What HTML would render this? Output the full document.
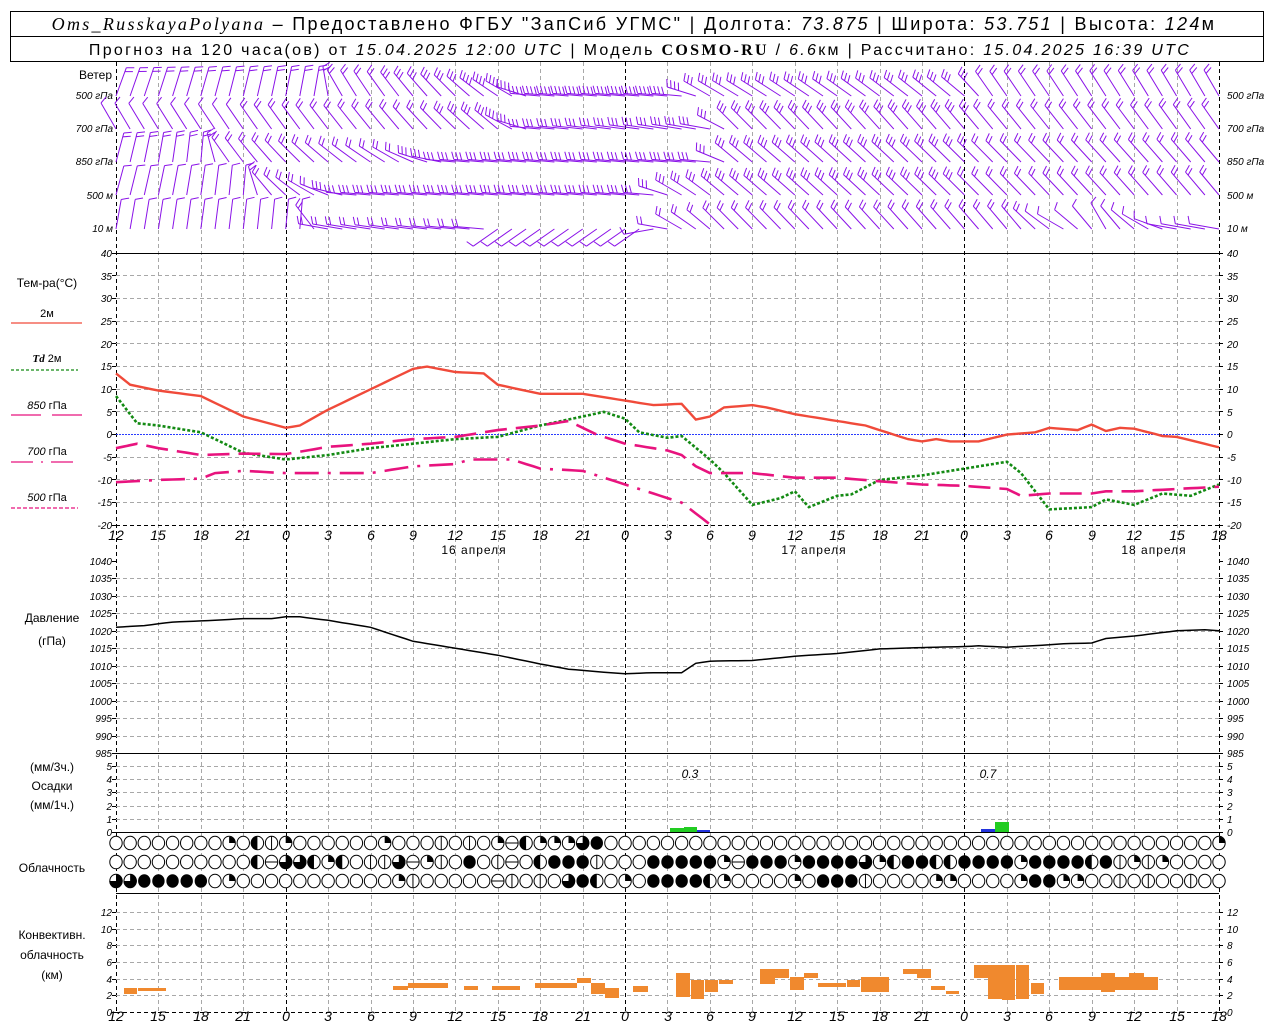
<!DOCTYPE html>
<html><head><meta charset="utf-8">
<style>
html,body{margin:0;padding:0;background:#fff;}
svg{display:block;}
text{font-family:"Liberation Sans",sans-serif;fill:#000;}
.ax{font-size:10px;font-style:italic;}
.tl{font-size:14px;font-style:italic;}
.lb{font-size:12px;}
</style></head><body>
<svg id="s" width="1280" height="1024" viewBox="0 0 1280 1024" xmlns="http://www.w3.org/2000/svg">
<rect x="0" y="0" width="1280" height="1024" fill="#fff"/>
<g id="grid"></g>
<!-- header -->
<rect x="10.5" y="11.5" width="1253" height="50" fill="none" stroke="#000"/>
<line x1="10" y1="36.5" x2="1264" y2="36.5" stroke="#000"/>
<text x="634" y="30" text-anchor="middle" style="font-size:18px;letter-spacing:2.3px"><tspan font-style="italic" font-family="Liberation Serif">Oms_RusskayaPolyana</tspan> – Предоставлено ФГБУ "ЗапСиб УГМС" | Долгота: <tspan font-style="italic">73.875</tspan> | Широта: <tspan font-style="italic">53.751</tspan> | Высота: <tspan font-style="italic">124</tspan>м</text>
<text x="640" y="55" text-anchor="middle" style="font-size:16px;letter-spacing:2.3px">Прогноз на 120 часа(ов) от <tspan font-style="italic">15.04.2025 12:00 UTC</tspan> | Модель <tspan font-weight="bold" font-family="Liberation Serif">COSMO-RU</tspan> / <tspan font-style="italic">6.6</tspan>км | Рассчитано: <tspan font-style="italic">15.04.2025 16:39 UTC</tspan></text>

<!-- left labels wind -->
<g class="lb">
<text x="112" y="79" text-anchor="end">Ветер</text>
</g>
<g class="ax" text-anchor="end">
<text x="113" y="99"><tspan>500</tspan> гПа</text>
<text x="113" y="132">700 гПа</text>
<text x="113" y="165">850 гПа</text>
<text x="113" y="199">500 м</text>
<text x="113" y="232">10  м</text>
</g>
<g class="ax">
<text x="1227" y="99">500 гПа</text>
<text x="1227" y="132">700 гПа</text>
<text x="1227" y="165">850 гПа</text>
<text x="1227" y="199">500 м</text>
<text x="1227" y="232">10  м</text>
</g>

<!-- temp legend -->
<g class="lb" text-anchor="middle">
<text x="47" y="287">Тем-ра(°С)</text>
<text x="47" y="317" style="font-size:11px">2м</text>
<text x="47" y="362" style="font-size:11px"><tspan font-style="italic" font-weight="bold" font-family="Liberation Serif">Td</tspan>  2м</text>
<text x="47" y="409" style="font-size:11px"><tspan font-style="italic">850</tspan> гПа</text>
<text x="47" y="455" style="font-size:11px"><tspan font-style="italic">700</tspan> гПа</text>
<text x="47" y="501" style="font-size:11px"><tspan font-style="italic">500</tspan> гПа</text>
<text x="52" y="622">Давление</text>
<text x="52" y="645">(гПа)</text>
<text x="52" y="771">(мм/3ч.)</text>
<text x="52" y="790">Осадки</text>
<text x="52" y="809">(мм/1ч.)</text>
<text x="52" y="872">Облачность</text>
<text x="52" y="939">Конвективн.</text>
<text x="52" y="959">облачность</text>
<text x="52" y="979">(км)</text>
</g>
<line x1="11" y1="323" x2="82" y2="323" stroke="#f04a3a" stroke-width="1.2"/>
<line x1="11" y1="370" x2="78" y2="370" stroke="#138a13" stroke-width="1.2" stroke-dasharray="3,2"/>
<line x1="11" y1="415" x2="41" y2="415" stroke="#e8137e" stroke-width="1.2"/>
<line x1="52" y1="415" x2="82" y2="415" stroke="#e8137e" stroke-width="1.2"/>
<line x1="11" y1="462" x2="78" y2="462" stroke="#e8137e" stroke-width="1.2" stroke-dasharray="22,8,2,8"/>
<line x1="11" y1="508" x2="78" y2="508" stroke="#e8137e" stroke-width="1.2" stroke-dasharray="4,2"/>

<!-- temp ticks -->
<g class="ax" text-anchor="end">
<text x="112" y="257">40</text><text x="112" y="280">35</text><text x="112" y="302">30</text><text x="112" y="325">25</text><text x="112" y="348">20</text><text x="112" y="370">15</text><text x="112" y="393">10</text><text x="112" y="416">5</text><text x="112" y="438">0</text><text x="112" y="461">-5</text><text x="112" y="484">-10</text><text x="112" y="506">-15</text><text x="112" y="529">-20</text>
<text x="112" y="565">1040</text><text x="112" y="582">1035</text><text x="112" y="600">1030</text><text x="112" y="617">1025</text><text x="112" y="635">1020</text><text x="112" y="652">1015</text><text x="112" y="670">1010</text><text x="112" y="687">1005</text><text x="112" y="705">1000</text><text x="112" y="722">995</text><text x="112" y="740">990</text><text x="112" y="757">985</text>
<text x="112" y="770">5</text><text x="112" y="783">4</text><text x="112" y="796">3</text><text x="112" y="810">2</text><text x="112" y="823">1</text><text x="112" y="836">0</text>
<text x="112" y="916">12</text><text x="112" y="933">10</text><text x="112" y="949">8</text><text x="112" y="966">6</text><text x="112" y="983">4</text><text x="112" y="999">2</text><text x="112" y="1016">0</text>
</g>
<g class="ax">
<text x="1227" y="257">40</text><text x="1227" y="280">35</text><text x="1227" y="302">30</text><text x="1227" y="325">25</text><text x="1227" y="348">20</text><text x="1227" y="370">15</text><text x="1227" y="393">10</text><text x="1227" y="416">5</text><text x="1227" y="438">0</text><text x="1227" y="461">-5</text><text x="1227" y="484">-10</text><text x="1227" y="506">-15</text><text x="1227" y="529">-20</text>
<text x="1227" y="565">1040</text><text x="1227" y="582">1035</text><text x="1227" y="600">1030</text><text x="1227" y="617">1025</text><text x="1227" y="635">1020</text><text x="1227" y="652">1015</text><text x="1227" y="670">1010</text><text x="1227" y="687">1005</text><text x="1227" y="705">1000</text><text x="1227" y="722">995</text><text x="1227" y="740">990</text><text x="1227" y="757">985</text>
<text x="1227" y="770">5</text><text x="1227" y="783">4</text><text x="1227" y="796">3</text><text x="1227" y="810">2</text><text x="1227" y="823">1</text><text x="1227" y="836">0</text>
<text x="1227" y="916">12</text><text x="1227" y="933">10</text><text x="1227" y="949">8</text><text x="1227" y="966">6</text><text x="1227" y="983">4</text><text x="1227" y="999">2</text><text x="1227" y="1016">0</text>
</g>

<!-- time labels -->
<g class="tl" text-anchor="middle">
<text x="116" y="540">12</text><text x="158" y="540">15</text><text x="201" y="540">18</text><text x="243" y="540">21</text><text x="286" y="540">0</text><text x="328" y="540">3</text><text x="371" y="540">6</text><text x="413" y="540">9</text><text x="455" y="540">12</text><text x="498" y="540">15</text><text x="540" y="540">18</text><text x="583" y="540">21</text><text x="625" y="540">0</text><text x="668" y="540">3</text><text x="710" y="540">6</text><text x="752" y="540">9</text><text x="795" y="540">12</text><text x="837" y="540">15</text><text x="880" y="540">18</text><text x="922" y="540">21</text><text x="964" y="540">0</text><text x="1007" y="540">3</text><text x="1049" y="540">6</text><text x="1092" y="540">9</text><text x="1134" y="540">12</text><text x="1177" y="540">15</text><text x="1219" y="540">18</text>
<text x="116" y="1021">12</text><text x="158" y="1021">15</text><text x="201" y="1021">18</text><text x="243" y="1021">21</text><text x="286" y="1021">0</text><text x="328" y="1021">3</text><text x="371" y="1021">6</text><text x="413" y="1021">9</text><text x="455" y="1021">12</text><text x="498" y="1021">15</text><text x="540" y="1021">18</text><text x="583" y="1021">21</text><text x="625" y="1021">0</text><text x="668" y="1021">3</text><text x="710" y="1021">6</text><text x="752" y="1021">9</text><text x="795" y="1021">12</text><text x="837" y="1021">15</text><text x="880" y="1021">18</text><text x="922" y="1021">21</text><text x="964" y="1021">0</text><text x="1007" y="1021">3</text><text x="1049" y="1021">6</text><text x="1092" y="1021">9</text><text x="1134" y="1021">12</text><text x="1177" y="1021">15</text><text x="1219" y="1021">18</text>
</g>
<g class="lb" text-anchor="middle" style="letter-spacing:1px">
<text x="474" y="554">16 апреля</text>
<text x="814" y="554">17 апреля</text>
<text x="1154" y="554">18 апреля</text>
</g>
<text class="ax" x="690" y="778" text-anchor="middle" style="font-size:12px">0.3</text>
<text class="ax" x="988" y="778" text-anchor="middle" style="font-size:12px">0.7</text>

<g id="dyn"></g>
</svg>
<script>
(function(){
var NS="http://www.w3.org/2000/svg";
var G=document.getElementById('grid'), D=document.getElementById('dyn');
function el(p,tag,a){var e=document.createElementNS(NS,tag);for(var k in a)e.setAttribute(k,a[k]);p.appendChild(e);return e;}
function X(h){return 116+h*14.141;}
var gray="#a8a8a8";
for(var i=0;i<=26;i++){var x=Math.round(X(i*3))+0.5;var day=(i==4||i==12||i==20);var edge=(i==0||i==26);
  el(G,'line',{x1:x,y1:62,x2:x,y2:1012,stroke:(day||edge)?'#000':gray,'stroke-dasharray':'4,3','stroke-width':1});}
function hl(y,c,d){el(G,'line',{x1:116,y1:y+0.5,x2:1219,y2:y+0.5,stroke:c,'stroke-dasharray':d||'none'});}
for(var t=35;t>=-15;t-=5){ if(t!=0) hl(Math.round(434-t*4.533),gray,'4,3');}
for(var p=1035;p>=990;p-=5){hl(Math.round(561+(1040-p)*3.49),gray,'4,3');}
for(var m=1;m<=5;m++){hl(Math.round(832-m*13.2),gray,'4,3');}
for(var k=2;k<=12;k+=2){hl(Math.round(1012-k*8.32),gray,'4,3');}
hl(253,'#000');hl(753,'#000');hl(832,'#000');hl(893,'#000');hl(525,'#000','4,3');hl(1012,'#000','4,3');
el(G,'line',{x1:116,y1:434.5,x2:1219,y2:434.5,stroke:'#2a3cff','stroke-dasharray':'2,1'});
function ticks(y){el(G,'line',{x1:112,y1:y+.5,x2:116,y2:y+.5,stroke:'#000'});el(G,'line',{x1:1219,y1:y+.5,x2:1223,y2:y+.5,stroke:'#000'});}
for(var t=40;t>=-20;t-=5)ticks(Math.round(434-t*4.533));
for(var p=1040;p>=985;p-=5)ticks(Math.round(561+(1040-p)*3.49));
for(var m=0;m<=5;m++)ticks(Math.round(832-m*13.2));
for(var k=0;k<=12;k+=2)ticks(Math.round(1012-k*8.32));

function interp(kp,h){for(var i=0;i<kp.length-1;i++){if(h>=kp[i][0]&&h<=kp[i+1][0]){var f=(h-kp[i][0])/(kp[i+1][0]-kp[i][0]||1);var r=[];for(var j=1;j<kp[i].length;j++)r.push(kp[i][j]+(kp[i+1][j]-kp[i][j])*f);return r;}}var l=kp[kp.length-1];return l.slice(1);}
function line(kp,fy,attrs){var d='';for(var h=kp[0][0];h<=kp[kp.length-1][0];h+=0.5){var v=interp(kp,h)[0];d+=(d?'L':'M')+X(h).toFixed(1)+','+fy(v).toFixed(1);}attrs.d=d;attrs.fill='none';el(D,'path',attrs);}
function TY(t){return 434.6-t*4.533;}
var red=[[0,13.5],[1,11],[3,9.7],[6,8.5],[9,4],[12,1.5],[13,2],[15,5.5],[18,10],[21,14.5],[22,15],[24,13.8],[26,13.5],[27,11],[30,9],[33,9],[34,8.5],[36,7.5],[38,6.5],[40,6.8],[41,3.3],[42,4],[43,6],[45,6.5],[46,6],[48,4.5],[51,3],[53,2],[55,0],[56,-1],[57,-1.5],[58,-1],[59,-1.5],[61,-1.5],[63,0],[65,0.5],[66,1.5],[68,1],[69,2.2],[70,0.8],[71,1.5],[72,1.3],[74,-0.3],[75,-0.5],[78,-2.8]];
var td=[[0,8.5],[1.5,2.5],[3,2],[6,0.5],[9,-4],[12,-5.5],[15,-4.5],[18,-3],[21,-2],[24,-1],[27,-0.5],[30,2],[33,4],[34.5,5],[36,3.5],[37,0.5],[39,-0.7],[40,-0.3],[42,-5.5],[43,-8.5],[45,-15.5],[47,-14],[48,-12.5],[49,-16],[51,-13.5],[52,-13.2],[54,-10],[57,-9],[60,-7.5],[63,-6],[64,-8.5],[66,-16.5],[69,-16],[70,-14.3],[72,-15.5],[74,-13],[76,-13.5],[78,-11]];
var p850=[[0,-3],[1.5,-2],[3,-3],[6,-4.5],[9,-4.2],[12,-4.3],[15,-2.7],[18,-2],[21,-1],[24,-0.5],[27,1],[30,2],[32,3],[33,1.5],[34,0],[36,-2],[39,-3.5],[40,-4.5],[41,-7],[42,-8.5],[45,-8.5],[48,-9.5],[51,-9.5],[54,-10.3],[57,-11],[60,-11.3],[63,-12],[64,-13.5],[66,-13],[69,-13],[70,-12.5],[72,-12.5],[75,-12],[78,-11.5]];
var p700=[[0,-10.5],[3,-10],[6,-9.7],[7,-8.5],[9,-8],[12,-8.5],[15,-8.5],[18,-8.5],[21,-7],[24,-6.5],[25,-5.5],[28,-5.5],[30,-7.5],[33,-8],[36,-11],[39,-14],[40,-15],[42,-19.8]];
line(red,TY,{stroke:'#f04a3a','stroke-width':2.4});
line(td,TY,{stroke:'#138a13','stroke-width':2.6,'stroke-dasharray':'3,2'});
line(p850,TY,{stroke:'#e8137e','stroke-width':2.6,'stroke-dasharray':'22,9'});
line(p700,TY,{stroke:'#e8137e','stroke-width':2.6,'stroke-dasharray':'24,9,3,9'});
var pr=[[0,1021],[2,1021.5],[4,1022.5],[7,1023],[9,1023.5],[11,1023.5],[12,1024],[13,1024],[15,1023],[18,1021],[21,1017],[24,1015],[27,1013],[30,1010.5],[32,1009],[34,1008.3],[36,1007.7],[38,1008],[40,1008],[41,1010.7],[42,1011.3],[45,1011.5],[48,1012.7],[51,1013.5],[54,1014.8],[57,1015.2],[60,1015.5],[61,1015.7],[63,1015.3],[66,1016],[67,1016.3],[69,1016.5],[70,1017.8],[72,1018.5],[75,1020],[77,1020.3],[78,1020]];
line(pr,function(p){return 561+(1040-p)*3.49;},{stroke:'#000','stroke-width':1.5});

el(D,'rect',{x:670,y:828,width:14,height:4,fill:'#22cc22'});
el(D,'rect',{x:684,y:827,width:13,height:5,fill:'#22cc22'});
el(D,'rect',{x:697,y:830,width:13,height:2,fill:'#2233dd'});
el(D,'rect',{x:981,y:829,width:14,height:3,fill:'#2233dd'});
el(D,'rect',{x:995,y:822,width:14,height:10,fill:'#22cc22'});

var cb=[[124,988,13,6],[138,988,28,3],[393,986,15,4],[408,983,40,5],[464,986,14,4],[492,986,28,4],[535,983,27,5],[562,983,15,5],[577,978,14,5],[591,983,14,11],[605,988,14,10],[633,986,15,6],[676,973,14,24],[691,980,13,19],[705,980,13,12],[719,980,14,4],[760,969,15,15],[775,969,14,9],[790,977,14,13],[804,973,14,5],[818,983,28,4],[847,980,13,7],[861,977,28,15],[903,969,28,5],[917,974,14,4],[931,986,14,4],[946,991,13,3],[974,965,14,13],[988,965,14,34],[1002,965,13,35],[1016,965,13,34],[1031,983,13,11],[1059,977,42,13],[1101,973,14,19],[1115,977,14,13],[1129,973,15,17],[1144,977,14,13]];
cb.forEach(function(b){el(D,'rect',{x:b[0],y:b[1],width:b[2],height:b[3],fill:'#f0892e'});});

var rows=[
"00000000204120000002000101023422268000000000000000000000000000000000000000000022",
"00000000004366424011632108013048881000888882388828888624884488882888848121200000",
"66888887200000000000210000031010684020888842000020888100002200002882200101001000"];
var cy=[843,862,881];
function wedge(cx,cy,r,a0,a1){var p='M'+cx+','+cy;for(var a=a0;a<=a1+0.01;a+=10){var rad=(a-90)*Math.PI/180;p+='L'+(cx+r*Math.cos(rad)).toFixed(2)+','+(cy+r*Math.sin(rad)).toFixed(2);}return p+'Z';}
for(var r=0;r<3;r++){for(var i=0;i<=78;i++){var c=rows[r][i]||'0';var cx=X(i),y=cy[r],rr=6.2;
  if(c=='8'){el(D,'ellipse',{cx:cx,cy:y,rx:rr,ry:rr+0.6,fill:'#000'});continue;}
  el(D,'ellipse',{cx:cx,cy:y,rx:rr,ry:rr+0.6,fill:'#fff',stroke:'#000','stroke-width':1});
  if(c=='2')el(D,'path',{d:wedge(cx,y,rr,0,90),fill:'#000'});
  if(c=='4')el(D,'path',{d:wedge(cx,y,rr+0.5,180,360),fill:'#000'});
  if(c=='6')el(D,'path',{d:wedge(cx,y,rr+0.5,0,270),fill:'#000'});
  if(c=='1')el(D,'line',{x1:cx,y1:y-rr-0.6,x2:cx,y2:y+rr+0.6,stroke:'#000'});
  if(c=='3')el(D,'line',{x1:cx-rr,y1:y,x2:cx+rr,y2:y,stroke:'#000'});
}}

var rowsW=[
 {y:96,kp:[[0,20,2],[14,10,2],[16,-30,2],[24,-45,3],[28,-60,4],[30,-85,4],[40,-85,4],[42,-60,3],[60,-50,3],[62,-35,2],[78,-30,2]]},
 {y:129,kp:[[0,-30,1],[20,-40,2],[27,-50,3],[30,-85,3],[42,-80,3],[44,-45,3],[78,-35,2]]},
 {y:162,kp:[[0,15,2],[6,5,2],[8,-35,2],[20,-60,2],[24,-85,3],[42,-85,3],[44,-50,3],[78,-40,2]]},
 {y:195,kp:[[0,15,1],[9,5,1],[11,-40,2],[14,-60,2],[17,-85,3],[38,-85,3],[40,-60,3],[43,-50,3],[78,-40,2]]},
 {y:229,kp:[[0,10,1],[13,5,1],[15,-80,2],[26,-85,2],[27,-125,1],[37,-125,1],[38,-100,1],[40,-60,2],[43,-45,2],[64,-40,2],[67,-60,1],[70,-30,1],[75,-80,1],[78,-80,1]]}];
var col='#8a12e8';
rowsW.forEach(function(R){for(var h=0;h<=78;h++){var v=interp(R.kp,h),a=v[0]*Math.PI/180,n=Math.round(v[1]);var L=30;var x0=X(h),y0=R.y;
  var dx=Math.sin(a),dy=-Math.cos(a);var tx=x0+dx*L,ty=y0+dy*L;
  var d='M'+x0.toFixed(1)+','+y0+'L'+tx.toFixed(1)+','+ty.toFixed(1);
  var fa=a+Math.PI/2-0.35;var fx=Math.sin(fa),fy=-Math.cos(fa);
  for(var k=0;k<n;k++){var px=tx-dx*k*4,py=ty-dy*k*4;var fl=8;d+='M'+px.toFixed(1)+','+py.toFixed(1)+'L'+(px+fx*fl).toFixed(1)+','+(py+fy*fl).toFixed(1);}
  el(D,'path',{d:d,stroke:col,'stroke-width':1,fill:'none'});}});
})();
</script>
</body></html>
